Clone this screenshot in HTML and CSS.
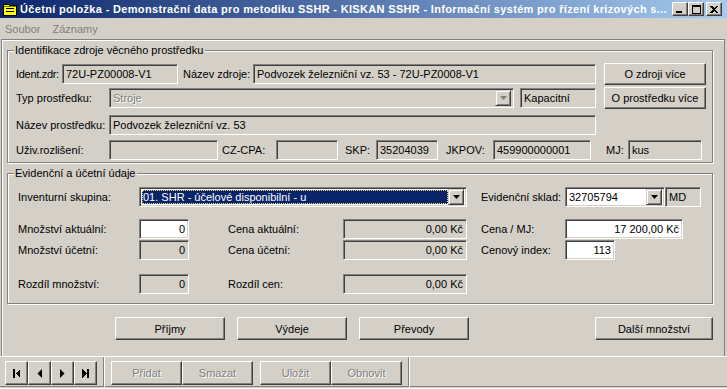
FILE: index.html
```html
<!DOCTYPE html>
<html lang="cs">
<head>
<meta charset="utf-8">
<title>Účetní položka</title>
<link rel="stylesheet" href="styles.css">
</head>
<body>
<div class="win">
  <div class="titlebar">
    <svg class="appicon" width="14" height="13" viewBox="0 0 14 13" shape-rendering="crispEdges">
      <path d="M0.5 1.5 H5.5 L6.5 2.5 H13.5 V12.5 H0.5 Z" fill="#ffff00" stroke="#000"/>
      <rect x="3" y="5" width="8" height="1" fill="#000"/>
      <rect x="3" y="8" width="8" height="1" fill="#000"/>
      <rect x="1" y="3" width="12" height="1" fill="#808000"/>
    </svg>
    <span class="title">Účetní položka - Demonstrační data pro metodiku SSHR - KISKAN SSHR - Informační systém pro řízení krizových s...</span>
    <div class="caps">
      <span class="cap"><svg width="8" height="7" viewBox="0 0 8 7" shape-rendering="crispEdges"><rect x="0" y="5" width="6" height="2" fill="#000"/></svg></span>
      <span class="cap"><svg width="9" height="9" viewBox="0 0 9 9" shape-rendering="crispEdges"><path d="M0 0 H9 V9 H0 Z M1 2 V8 H8 V2 Z" fill="#000" fill-rule="evenodd"/></svg></span>
      <span class="cap close"><svg width="8" height="7" viewBox="0 0 8 7" shape-rendering="crispEdges"><path d="M0 0 H2 L4 2 L6 0 H8 L5 3.5 L8 7 H6 L4 5 L2 7 H0 L3 3.5 Z" fill="#000"/></svg></span>
    </div>
  </div>
  <div class="menubar"><span class="mi">Soubor</span><span class="mi">Záznamy</span></div>

  <div class="client">
    <div class="group g1">
      <div class="legend">Identifikace zdroje věcného prostředku</div>
      <div class="row r1">
        <span class="lbl w46 tight">Ident.zdr:</span>
        <span class="tb w116">72U-PZ00008-V1</span>
        <span class="lbl w70 ml5">Název zdroje:</span>
        <span class="tb w343">Podvozek železniční vz. 53 - 72U-PZ0008-V1</span>
        <span class="btn bsrc">O zdroji více</span>
      </div>
      <div class="row r2">
        <span class="lbl w93">Typ prostředku:</span>
        <span class="tb combo w405"><span class="ctext dis">Stroje</span><span class="arrow"><svg width="7" height="4" viewBox="0 0 7 4"><path d="M0 0 H7 L3.5 4 Z" fill="#808080"/></svg></span></span>
        <span class="tb w76 ml6">Kapacitní</span>
        <span class="btn bsrc">O prostředku více</span>
      </div>
      <div class="row r3">
        <span class="lbl w93">Název prostředku:</span>
        <span class="tb w487">Podvozek železniční vz. 53</span>
      </div>
      <div class="row r4">
        <span class="lbl w93">Uživ.rozlišení:</span>
        <span class="tb w109"></span>
        <span class="lbl w54 ml4">CZ-CPA:</span>
        <span class="tb w62"></span>
        <span class="lbl w31 ml7">SKP:</span>
        <span class="tb w62">35204039</span>
        <span class="lbl w47 ml8">JKPOV:</span>
        <span class="tb w98">459900000001</span>
        <span class="lbl w22 ml15">MJ:</span>
        <span class="tb w74">kus</span>
      </div>
    </div>

    <div class="group g2">
      <div class="legend">Evidenční a účetní údaje</div>
      <div class="row ra">
        <span class="lbl w121">Inventurní skupina:</span>
        <span class="tb combo white w328"><span class="ctext sel">01. SHR - účelové disponibilní - u</span><span class="arrow"><svg width="7" height="4" viewBox="0 0 7 4"><path d="M0 0 H7 L3.5 4 Z" fill="#000"/></svg></span></span>
        <span class="lbl w84 ml14">Evidenční sklad:</span>
        <span class="tb combo white w100"><span class="ctext">32705794</span><span class="arrow"><svg width="7" height="4" viewBox="0 0 7 4"><path d="M0 0 H7 L3.5 4 Z" fill="#000"/></svg></span></span>
        <span class="tb w36">MD</span>
      </div>
      <div class="row rb">
        <span class="lbl w121">Množství aktuální:</span>
        <span class="tb white num w50">0</span>
        <span class="lbl w115 ml39">Cena aktuální:</span>
        <span class="tb num w124">0,00 Kč</span>
        <span class="lbl w84 ml14">Cena / MJ:</span>
        <span class="tb white num w118">17 200,00 Kč</span>
      </div>
      <div class="row rc">
        <span class="lbl w121">Množství účetní:</span>
        <span class="tb num w50">0</span>
        <span class="lbl w115 ml39">Cena účetní:</span>
        <span class="tb num w124">0,00 Kč</span>
        <span class="lbl w84 ml14">Cenový index:</span>
        <span class="tb white num w50">113</span>
      </div>
      <div class="row rd">
        <span class="lbl w121">Rozdíl množství:</span>
        <span class="tb num w50">0</span>
        <span class="lbl w115 ml39">Rozdíl cen:</span>
        <span class="tb num w124">0,00 Kč</span>
      </div>
    </div>

    <div class="actions">
      <span class="btn bact">Příjmy</span>
      <span class="btn bact">Výdeje</span>
      <span class="btn bact">Převody</span>
      <span class="btn bact bmore">Další množství</span>
    </div>
  </div>

  <div class="toolbar">
    <div class="nav">
      <span class="btn nb"><svg width="7" height="9" viewBox="0 0 7 9" shape-rendering="crispEdges"><rect x="0" y="0" width="2" height="9" fill="#000"/><path d="M7 0 L2.5 4.5 L7 9 Z" fill="#000"/></svg></span>
      <span class="btn nb"><svg width="5" height="9" viewBox="0 0 5 9"><path d="M5 0 L0.5 4.5 L5 9 Z" fill="#000"/></svg></span>
      <span class="btn nb"><svg width="5" height="9" viewBox="0 0 5 9"><path d="M0 0 L4.5 4.5 L0 9 Z" fill="#000"/></svg></span>
      <span class="btn nb"><svg width="7" height="9" viewBox="0 0 7 9" shape-rendering="crispEdges"><path d="M0 0 L4.5 4.5 L0 9 Z" fill="#000"/><rect x="5" y="0" width="2" height="9" fill="#000"/></svg></span>
    </div>
    <span class="sep"></span>
    <div class="edit">
      <span class="btn tbtn dis">Přidat</span>
      <span class="btn tbtn dis">Smazat</span>
      <span class="btn tbtn dis gap">Uložit</span>
      <span class="btn tbtn dis">Obnovit</span>
    </div>
    <span class="sep"></span>
  </div>
</div>
</body>
</html>
```

FILE: styles.css
```css
* { box-sizing: border-box; }
html, body { margin: 0; padding: 0; }
body {
  background: #d4d0c8;
  font-family: "Liberation Sans", Arial, sans-serif;
  font-size: 11px;
  color: #000;
}
.win {
  width: 727px;
  height: 389px;
  display: flex;
  flex-direction: column;
  background: #d4d0c8;
  overflow: hidden;
}

/* title bar */
.titlebar {
  height: 18px;
  flex: none;
  display: flex;
  align-items: center;
  background: linear-gradient(to right, #0a246a, #a6caf0);
}
.appicon { margin-left: 3px; flex: none; }
.title {
  margin-left: 3px;
  flex: 1;
  color: #fff;
  font-weight: bold;
  letter-spacing: 0.33px;
  white-space: nowrap;
  overflow: hidden;
}
.caps { display: flex; margin-right: 5px; flex: none; }
.cap {
  width: 16px;
  height: 14px;
  display: flex;
  align-items: center;
  justify-content: center;
  background: #d4d0c8;
  border: 1px solid;
  border-color: #fff #404040 #404040 #fff;
  box-shadow: inset -1px -1px 0 #808080;
}
.cap.close { margin-left: 2px; }

/* menu */
.menubar {
  height: 21px;
  flex: none;
  display: flex;
  align-items: center;
  padding-left: 5px;
}
.mi { color: #808080; margin-right: 12px; }

/* client panel */
.client {
  height: 317px;
  flex: none;
  margin: 0 2px 0 1px;
  border: 1px solid #808080;
  border-bottom: 0;
  box-shadow: inset 1px 1px 0 #fff;
  display: flex;
  flex-direction: column;
}

.group {
  position: relative;
  margin-left: 5px;
  width: 706px;
  border: 1px solid #808080;
  box-shadow: inset 1px 1px 0 #fff, 1px 1px 0 #fff;
  flex: none;
}
.g1 { margin-top: 10px; height: 113px; }
.g2 { margin-top: 10px; height: 131px; }
.legend {
  position: absolute;
  top: -7px;
  left: 6px;
  padding: 0 2px 0 1px;
  background: #d4d0c8;
  line-height: 13px;
  white-space: nowrap;
}

.row { display: flex; align-items: center; }
.g1 .row { padding-left: 8px; }
.g2 .row { padding-left: 10px; }
.r1 { margin-top: 12px; height: 22px; }
.r2 { margin-top: 2px; height: 22px; }
.r3 { margin-top: 6px; height: 20px; }
.r4 { margin-top: 5px; height: 20px; }
.ra { margin-top: 13px; height: 20px; }
.rb { margin-top: 12px; height: 20px; }
.rc { margin-top: 1px; height: 20px; }
.rd { margin-top: 14px; height: 20px; }

.lbl { white-space: nowrap; flex: none; }
.lbl.tight { letter-spacing: -0.3px; }
.w22 { width: 22px; } .w31 { width: 31px; } .w36 { width: 36px; }
.w46 { width: 46px; } .w47 { width: 47px; } .w50 { width: 50px; }
.w54 { width: 54px; } .w62 { width: 62px; } .w70 { width: 70px; }
.w74 { width: 74px; } .w76 { width: 76px; } .w84 { width: 84px; }
.w93 { width: 93px; } .w98 { width: 98px; } .w100 { width: 100px; }
.w109 { width: 109px; } .w115 { width: 115px; } .w116 { width: 116px; }
.w118 { width: 118px; } .w121 { width: 121px; } .w124 { width: 124px; }
.w328 { width: 328px; } .w343 { width: 343px; } .w405 { width: 405px; }
.w487 { width: 487px; }
.ml4 { margin-left: 4px; } .ml5 { margin-left: 5px; } .ml6 { margin-left: 6px; }
.ml7 { margin-left: 7px; } .ml8 { margin-left: 8px; } .ml14 { margin-left: 14px; }
.ml15 { margin-left: 15px; } .ml39 { margin-left: 39px; }

.tb {
  flex: none;
  height: 20px;
  display: flex;
  align-items: center;
  padding: 0 3px;
  white-space: nowrap;
  overflow: hidden;
  background: #d4d0c8;
  border: 1px solid;
  border-color: #808080 #fff #fff #808080;
  box-shadow: inset 1px 1px 0 #404040, inset -1px -1px 0 #d4d0c8;
}
.tb.white { background: #fff; }
.tb.num { justify-content: flex-end; }
.tb.combo { padding: 2px; }
.ctext {
  flex: 1;
  height: 100%;
  display: flex;
  align-items: center;
  padding-left: 1px;
  white-space: nowrap;
  overflow: hidden;
}
.ctext.dis { color: #808080; }
.ctext.sel {
  background: #0a246a;
  color: #fff;
  outline: 1px dotted #e8e070;
  outline-offset: -1px;
}
.arrow {
  flex: none;
  width: 16px;
  height: 16px;
  display: flex;
  align-items: center;
  justify-content: center;
  background: #d4d0c8;
  border: 1px solid;
  border-color: #d4d0c8 #404040 #404040 #d4d0c8;
  box-shadow: inset 1px 1px 0 #fff, inset -1px -1px 0 #808080;
}

.btn {
  flex: none;
  display: flex;
  align-items: center;
  justify-content: center;
  white-space: nowrap;
  background: #d4d0c8;
  border: 1px solid;
  border-color: #fff #404040 #404040 #fff;
  box-shadow: inset -1px -1px 0 #808080;
}
.bsrc { margin-left: 8px; width: 102px; height: 22px; }

.actions {
  display: flex;
  margin-top: 13px;
  padding-left: 113px;
}
.bact { width: 110px; height: 23px; margin-right: 12px; }
.bact.bmore { width: 118px; margin-left: 114px; margin-right: 0; }

/* bottom toolbar */
.toolbar {
  flex: 1;
  display: flex;
  align-items: flex-start;
  border-top: 1px solid #fff;
  padding-top: 4px;
  padding-left: 5px;
  box-shadow: inset 0 -1px 0 #fff, inset 0 -2px 0 #d4d0c8, inset 0 -3px 0 #808080;
}
.nav { display: flex; }
.nb { width: 23px; height: 24px; }
.sep {
  width: 2px;
  height: 30px;
  margin-top: -4px;
  border-left: 1px solid #808080;
  border-right: 1px solid #fff;
  margin-left: 6px;
  margin-right: 6px;
}
.edit { display: flex; }
.tbtn { width: 71px; height: 24px; }
.tbtn.gap { margin-left: 7px; }
.dis { color: #808080; text-shadow: 1px 1px 0 #fff; }
```
